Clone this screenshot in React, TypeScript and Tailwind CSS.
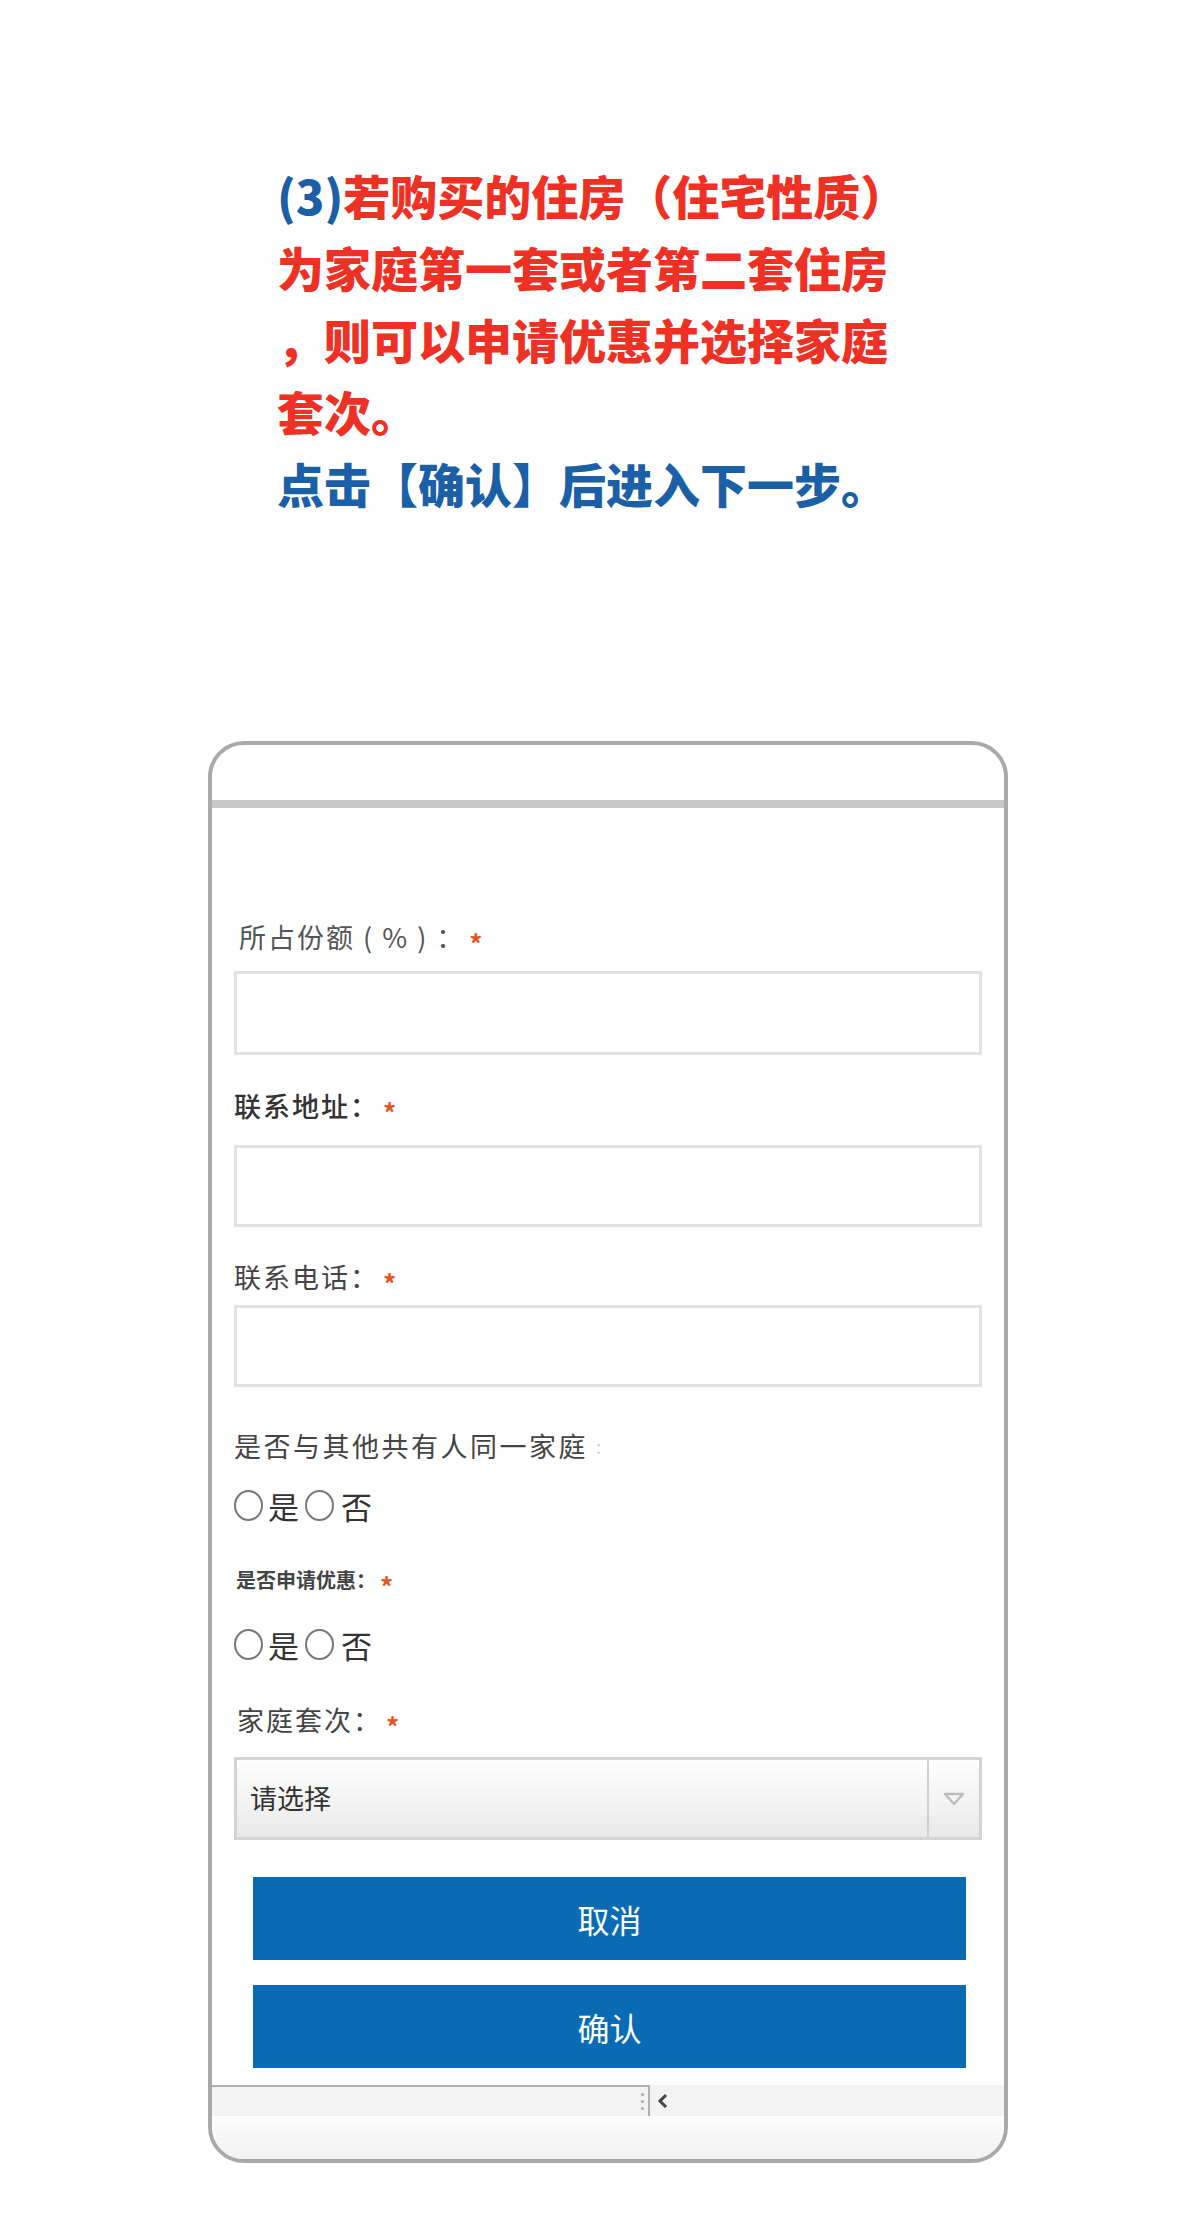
import React from 'react'

const cjk = { fontFamily: '"Noto Sans CJK SC", "Noto Sans", sans-serif' }

function Star() {
  return <span className="text-[#e8531f] text-[26px] font-bold ml-[4px] relative top-[6px] leading-none">*</span>
}

function Field({ top, height = 82 }: { top: string; height?: number }) {
  return (
    <div
      className={`${top} mx-[22px] border-[3px] border-[#e2e2e2] bg-white`}
      style={{ height }}
    />
  )
}

function Radios({ top }: { top: string }) {
  return (
    <div className={`${top} ml-[22px] flex items-center h-[40px] text-[31px] text-[#333] leading-none`}>
      <span className="w-[29px] h-[31px] rounded-[50%] border-2 border-[#777] mr-[5px]" />
      <span>是</span>
      <span className="w-[29px] h-[31px] rounded-[50%] border-2 border-[#777] ml-[6px] mr-[7px]" />
      <span>否</span>
    </div>
  )
}

export default function App() {
  return (
    <div className="w-[1200px] h-[2228px] bg-white overflow-hidden" style={cjk}>
      {/* instruction text */}
      <div className="pt-[159px] pl-[277px] text-[47px] font-black leading-[72px] text-[#ee3124]">
        <div>
          <span className="text-[#1b5fa7]">(3)</span>若购买的住房（住宅性质）
        </div>
        <div>为家庭第一套或者第二套住房</div>
        <div>，则可以申请优惠并选择家庭</div>
        <div>套次。</div>
        <div className="text-[#1b5fa7]">点击【确认】后进入下一步。</div>
      </div>

      {/* phone frame */}
      <div className="mt-[222px] ml-[208px] w-[800px] h-[1422px] border-4 border-[#a9a9a9] rounded-[36px] overflow-hidden flex flex-col bg-white">
        <div className="h-[55px] shrink-0" />
        <div className="h-[8px] bg-[#c8c8c8] shrink-0" />

        <div className="mt-[109px] ml-[27px] h-[40px] flex items-center text-[27px] text-[#555] tracking-[2px]">
          所占份额 ( % ) ：<Star />
        </div>
        <Field top="mt-[14px]" height={84} />

        <div className="mt-[31px] ml-[22px] h-[40px] flex items-center text-[27px] text-[#333] font-medium tracking-[2px]">
          联系地址：<Star />
        </div>
        <Field top="mt-[19px]" />

        <div className="mt-[30px] ml-[22px] h-[40px] flex items-center text-[27px] text-[#444] tracking-[2px]">
          联系电话：<Star />
        </div>
        <Field top="mt-[8px]" />

        <div className="mt-[39px] ml-[22px] h-[40px] flex items-center text-[27px] text-[#444] tracking-[2.5px]">
          是否与其他共有人同一家庭<span className="text-[#ccc] ml-2 text-[18px]">:</span>
        </div>
        <Radios top="mt-[19px]" />

        <div className="mt-[40px] ml-[24px] h-[30px] flex items-center text-[20px] text-[#444] font-bold">
          是否申请优惠：<Star />
        </div>
        <Radios top="mt-[29px]" />

        <div className="mt-[36px] ml-[25px] h-[40px] flex items-center text-[27px] text-[#444] tracking-[2px]">
          家庭套次：<Star />
        </div>

        <div className="mt-[17px] mx-[22px] h-[83px] border-[3px] border-[#d4d4d4] flex bg-gradient-to-b from-white to-[#e9e9e9]">
          <div className="flex-1 flex items-center pl-[13px] text-[27px] text-[#333]">请选择</div>
          <div className="w-[52px] border-l-2 border-[#d0d0d0] flex items-center justify-center">
            <svg width="22" height="14" viewBox="0 0 22 14">
              <path d="M2 2 L20 2 L11 12 Z" fill="none" stroke="#bdbdbd" strokeWidth="2.5" strokeLinejoin="round" />
            </svg>
          </div>
        </div>

        <button className="mt-[37px] ml-[41px] w-[713px] h-[83px] bg-[#0a6bb5] text-white text-[32px] flex items-center justify-center">
          取消
        </button>
        <button className="mt-[25px] ml-[41px] w-[713px] h-[83px] bg-[#0a6bb5] text-white text-[32px] flex items-center justify-center">
          确认
        </button>

        <div className="mt-[17px] h-[31px] flex bg-[#f3f3f3] shrink-0">
          <div className="w-[438px] border-t-2 border-r-2 border-[#b0b0b0] flex items-center justify-end pr-[4px]">
            <div className="flex flex-col gap-[4px]">
              <span className="w-[3px] h-[3px] rounded-full bg-[#aaa]" />
              <span className="w-[3px] h-[3px] rounded-full bg-[#aaa]" />
              <span className="w-[3px] h-[3px] rounded-full bg-[#aaa]" />
            </div>
          </div>
          <div className="flex items-center pl-[7px]">
            <svg width="12" height="16" viewBox="0 0 12 16">
              <path d="M9 2 L3 8 L9 14" fill="none" stroke="#444" strokeWidth="3" />
            </svg>
          </div>
        </div>
        <div className="flex-1 bg-gradient-to-b from-white via-[#f7f7f7] to-[#f2f2f2]" />
      </div>
    </div>
  )
}
